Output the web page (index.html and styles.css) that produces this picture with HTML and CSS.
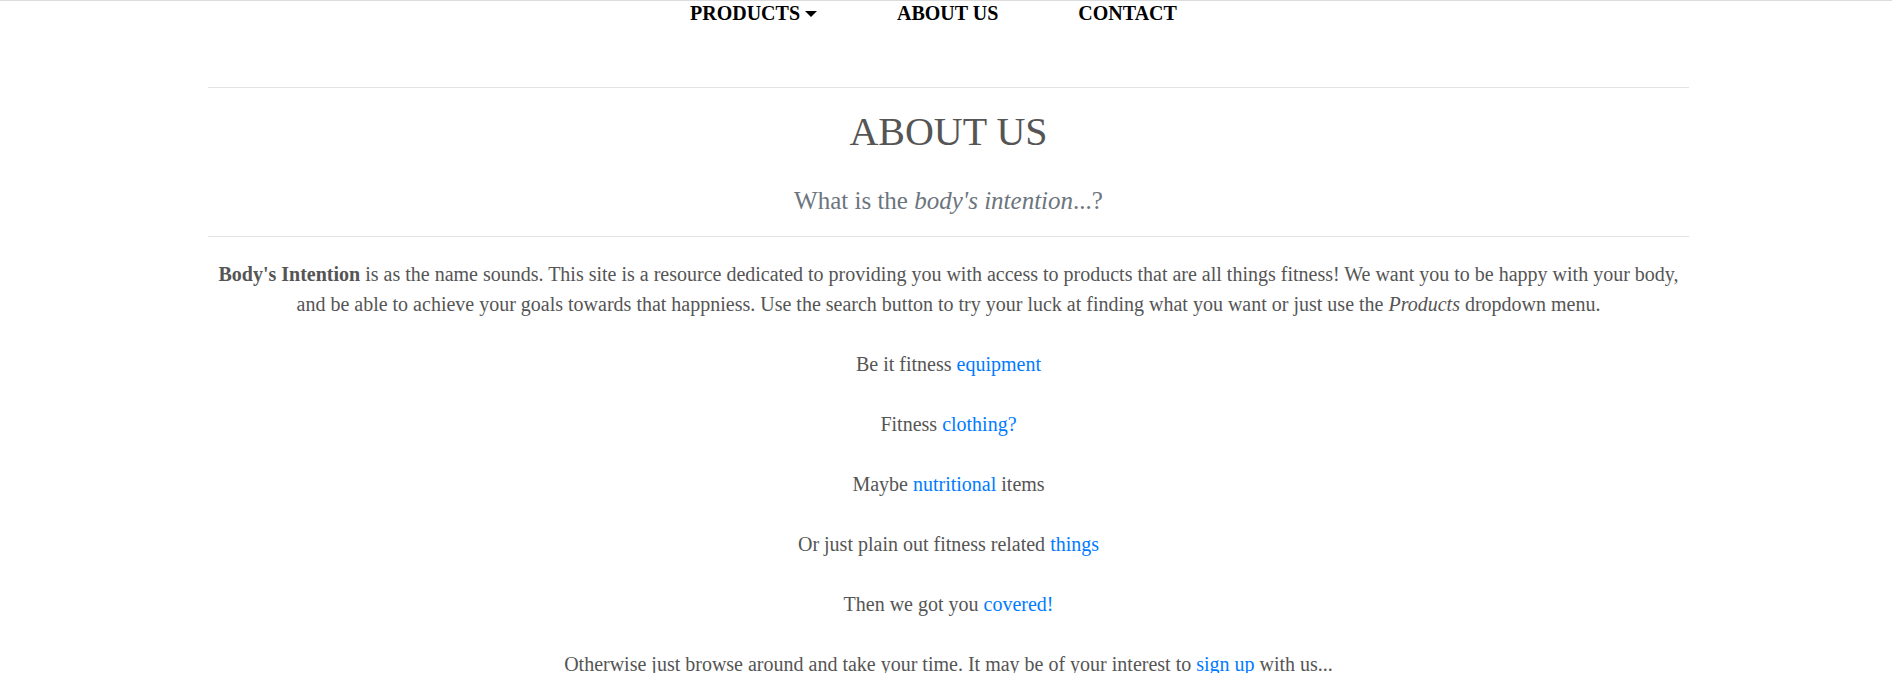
FILE: index.html
```html
<!DOCTYPE html>
<html lang="en">
<head>
<meta charset="utf-8">
<title>About Us - Body's Intention</title>
<link rel="stylesheet" href="styles.css">
</head>
<body>
<header class="topbar">
  <ul class="nav">
    <li class="nav-item"><a href="#" class="nav-link">PRODUCTS<span class="caret"></span></a></li>
    <li class="nav-item"><a href="#" class="nav-link">ABOUT US</a></li>
    <li class="nav-item"><a href="#" class="nav-link">CONTACT</a></li>
  </ul>
</header>
<main class="about">
  <hr class="rule rule-top">
  <h1 class="title">ABOUT US</h1>
  <h2 class="subtitle">What is the <em>body's intention</em>...?</h2>
  <hr class="rule rule-bottom">
  <p class="text"><strong>Body's Intention</strong> is as the name sounds. This site is a resource dedicated to providing you with access to products that are all things fitness! We want you to be happy with your body, and be able to achieve your goals towards that happniess. Use the search button to try your luck at finding what you want or just use the <em>Products</em> dropdown menu.</p>
  <p class="text">Be it fitness <a href="#">equipment</a></p>
  <p class="text">Fitness <a href="#">clothing?</a></p>
  <p class="text">Maybe <a href="#">nutritional</a> items</p>
  <p class="text">Or just plain out fitness related <a href="#">things</a></p>
  <p class="text">Then we got you <a href="#">covered!</a></p>
  <p class="text">Otherwise just browse around and take your time. It may be of your interest to <a href="#">sign up</a> with us...</p>
</main>
</body>
</html>
```
FILE: styles.css
```css
html, body {
  margin: 0;
  padding: 0;
  background: #fff;
}
body {
  font-family: "Liberation Serif", "Times New Roman", serif;
  color: #555;
}
.topbar {
  border-top: 1px solid #dcdcdc;
}
.nav {
  list-style: none;
  margin: 0;
  padding: 0 0 0 690px;
  display: flex;
  gap: 80px;
}
.nav-link {
  display: flex;
  align-items: center;
  font-size: 20px;
  line-height: 24px;
  font-weight: bold;
  color: #000;
  text-decoration: none;
}
.caret {
  display: inline-block;
  width: 0;
  height: 0;
  margin-left: 5px;
  margin-top: 1px;
  border-top: 6px solid #000;
  border-left: 6px solid transparent;
  border-right: 6px solid transparent;
}
.about {
  margin: 0 0 0 208px;
  width: 1481px;
  text-align: center;
}
.rule {
  border: 0;
  border-top: 1px solid #e3e3e3;
  margin: 0;
}
.rule-top {
  margin-top: 62px;
}
.title {
  font-size: 40px;
  line-height: 48px;
  font-weight: normal;
  color: #555;
  margin: 20px 0 0;
}
.subtitle {
  font-size: 25px;
  line-height: 30px;
  font-weight: normal;
  color: #6c757d;
  margin: 30px 0 0;
}
.rule-bottom {
  margin-top: 20px;
}
.text {
  font-size: 20px;
  line-height: 30px;
  margin: 0 0 30px;
  padding: 0 10px;
}
.rule-bottom + .text {
  margin-top: 22px;
}
.text strong {
  font-weight: bold;
}
.text a {
  color: #007bff;
  text-decoration: none;
}
```
